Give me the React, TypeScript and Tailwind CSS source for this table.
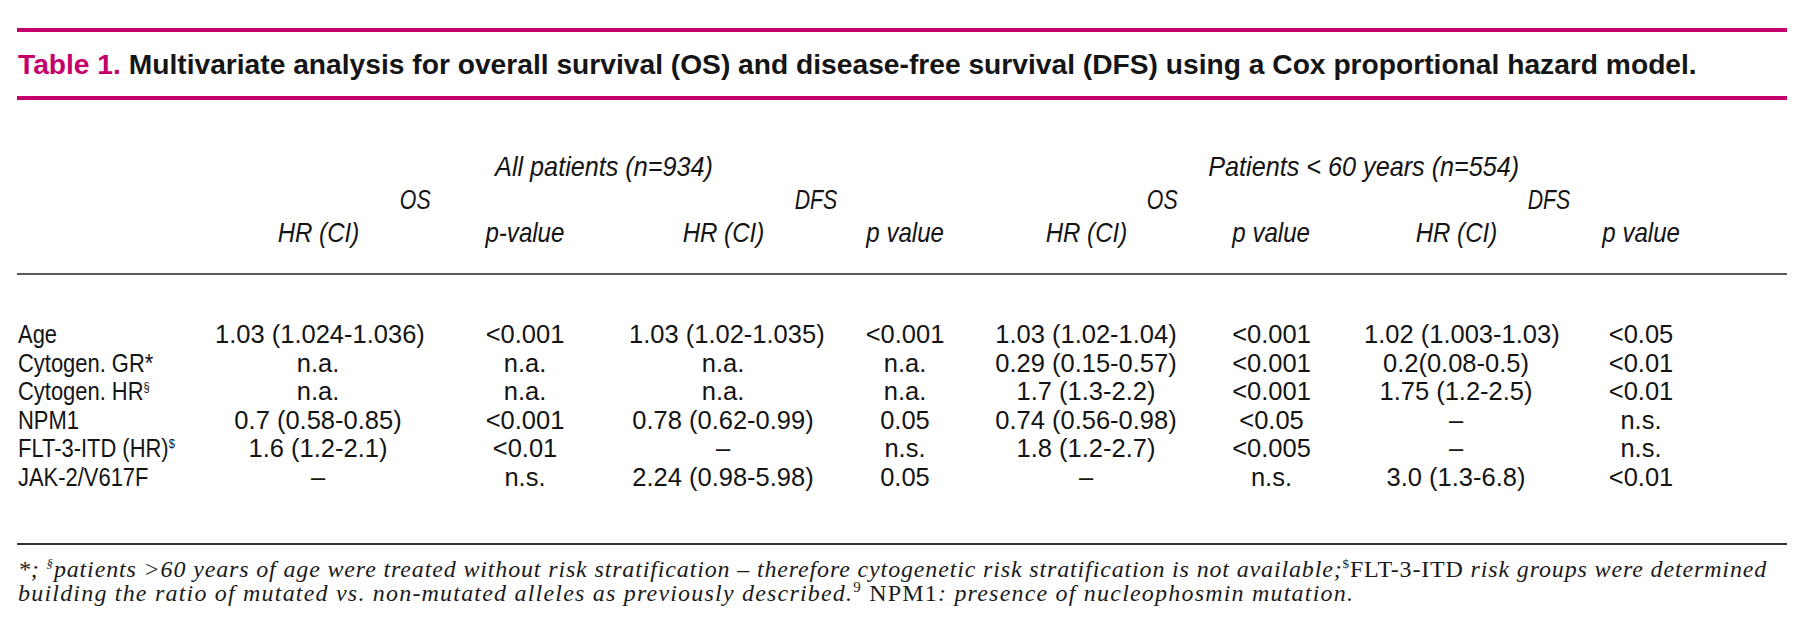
import React from "react";

const GRID =
  "grid grid-cols-[198px_206px_208px_188px_176px_186px_185px_184px_186px_1fr]";

type Row = { label: React.ReactNode; v: string[] };

const rows: Row[] = [
  {
    label: "Age",
    v: ["1.03 (1.024-1.036)", "<0.001", "1.03 (1.02-1.035)", "<0.001", "1.03 (1.02-1.04)", "<0.001", "1.02 (1.003-1.03)", "<0.05"],
  },
  {
    label: "Cytogen. GR*",
    v: ["n.a.", "n.a.", "n.a.", "n.a.", "0.29 (0.15-0.57)", "<0.001", "0.2(0.08-0.5)", "<0.01"],
  },
  {
    label: (
      <>
        Cytogen. HR<sup className="text-[13px] -top-[9px]">§</sup>
      </>
    ),
    v: ["n.a.", "n.a.", "n.a.", "n.a.", "1.7 (1.3-2.2)", "<0.001", "1.75 (1.2-2.5)", "<0.01"],
  },
  {
    label: "NPM1",
    v: ["0.7 (0.58-0.85)", "<0.001", "0.78 (0.62-0.99)", "0.05", "0.74 (0.56-0.98)", "<0.05", "–", "n.s."],
  },
  {
    label: (
      <>
        FLT-3-ITD (HR)<sup className="text-[13px] -top-[9px]">$</sup>
      </>
    ),
    v: ["1.6 (1.2-2.1)", "<0.01", "–", "n.s.", "1.8 (1.2-2.7)", "<0.005", "–", "n.s."],
  },
  {
    label: "JAK-2/V617F",
    v: ["–", "n.s.", "2.24 (0.98-5.98)", "0.05", "–", "n.s.", "3.0 (1.3-6.8)", "<0.01"],
  },
];

const colHeads = ["HR (CI)", "p-value", "HR (CI)", "p value", "HR (CI)", "p value", "HR (CI)", "p value"];

export default function App() {
  return (
    <div className="w-[1800px] h-[642px] bg-white overflow-hidden text-[#141414] font-['Liberation_Sans',sans-serif]">
      <div className="pl-[17px] pr-[13px] pt-[28px]">
        {/* top rule */}
        <div className="h-[4px] bg-[#c5006b]" />
        {/* title */}
        <div className="mt-[18px] h-[28px] leading-[28px] text-[28.2px] font-bold whitespace-nowrap pl-[1px]">
          <span className="text-[#c5006b]">Table 1.</span>{" "}
          <span className="text-[#151515]">
            Multivariate analysis for overall survival (OS) and disease-free survival (DFS) using a Cox proportional hazard model.
          </span>
        </div>
        <div className="mt-[18px] h-[4px] bg-[#c5006b]" />

        {/* header */}
        <div className={`${GRID} mt-[50px] italic text-[28px] leading-[33px]`}>
          <div className="col-start-2 col-span-4 text-center h-[33px]">
            <span className="inline-block scale-x-[0.9]">All patients (n=934)</span>
          </div>
          <div className="col-start-6 col-span-4 text-center h-[33px]">
            <span className="inline-block scale-x-[0.9]">Patients &lt; 60 years (n=554)</span>
          </div>

          <div className="col-start-2 col-span-2 text-center pr-[14px] h-[33px]">
            <span className="inline-block scale-x-[0.76]">OS</span>
          </div>
          <div className="col-start-4 col-span-2 text-center pl-[10px] h-[33px]">
            <span className="inline-block scale-x-[0.76]">DFS</span>
          </div>
          <div className="col-start-6 col-span-2 text-center pr-[32px] h-[33px]">
            <span className="inline-block scale-x-[0.76]">OS</span>
          </div>
          <div className="col-start-8 col-span-2 text-center h-[33px]">
            <span className="inline-block scale-x-[0.76]">DFS</span>
          </div>

          {colHeads.map((h, i) => (
            <div
              key={i}
              className={`text-center h-[33px] whitespace-nowrap ${i === 0 ? "col-start-2" : ""}`}
            >
              <span className="inline-block scale-x-[0.86]">{h}</span>
            </div>
          ))}
        </div>

        <div className="mt-[24px] h-[2px] bg-[#5a5a5a]" />

        {/* body */}
        <div className="mt-[45px] text-[25.5px] leading-[28.5px]">
          {rows.map((r, ri) => (
            <div key={ri} className={`${GRID} h-[28.5px]`}>
              <div className="pl-[1px] whitespace-nowrap">
                <span className="inline-block origin-left scale-x-[0.86]">{r.label}</span>
              </div>
              {r.v.map((v, vi) => (
                <div key={vi} className="text-center whitespace-nowrap">
                  {v}
                </div>
              ))}
            </div>
          ))}
        </div>

        <div className="mt-[52px] h-[2px] bg-[#333333]" />

        {/* footnote */}
        <p className="mt-[12px] pl-[1px] whitespace-nowrap italic text-[24px] leading-[24px] tracking-[0.85px] text-[#1a1a1a] font-['Liberation_Serif',serif]">
          *; <sup className="text-[13px] -top-[9px]">§</sup>patients &gt;60 years of age were treated without risk stratification – therefore cytogenetic risk stratification is not available;
          <sup className="text-[13px] -top-[9px] not-italic">$</sup>
          <span className="not-italic">FLT-3-ITD</span> risk groups were determined
          <br />
          <span className="tracking-[1.2px]">
            building the ratio of mutated vs. non-mutated alleles as previously described.
            <sup className="text-[15px] -top-[9px] not-italic">9</sup> <span className="not-italic">NPM1</span>: presence of nucleophosmin mutation.
          </span>
        </p>
      </div>
    </div>
  );
}
